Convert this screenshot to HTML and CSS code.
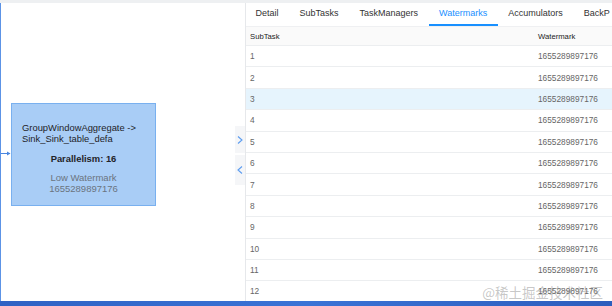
FILE: index.html
```html
<!DOCTYPE html>
<html lang="en">
<head>
  <meta charset="UTF-8">
  <title>Job Graph - Watermarks</title>
  <link rel="stylesheet" href="styles.css">
</head>
<body>
<div class="screen">
  <div class="main">
    <div class="graph">
      <svg class="edge" width="10" height="7" viewBox="0 0 10 7">
        <line x1="0" y1="3.5" x2="9" y2="3.5" stroke="#4a86e0" stroke-width="1"/>
        <path d="M6 1.5 L9.5 3.5 L6 5.5 Z" fill="#4a86e0"/>
      </svg>
      <div class="node">
        <div class="node-name">GroupWindowAggregate -&gt;<br>Sink_Sink_table_defa</div>
        <div class="node-par">Parallelism: 16</div>
        <div class="node-wm">Low Watermark<br>1655289897176</div>
      </div>
      <div class="toggle toggle-open">
        <svg width="8" height="10" viewBox="0 0 8 10"><path d="M2 1.5 L6 5 L2 8.5" fill="none" stroke="#5b9cf0" stroke-width="1.1"/></svg>
      </div>
      <div class="toggle toggle-close">
        <svg width="8" height="10" viewBox="0 0 8 10"><path d="M6 1.5 L2 5 L6 8.5" fill="none" stroke="#5b9cf0" stroke-width="1.1"/></svg>
      </div>
    </div>

    <div class="panel">
      <div class="tabs">
        <div class="tab">Detail</div>
        <div class="tab">SubTasks</div>
        <div class="tab">TaskManagers</div>
        <div class="tab active">Watermarks</div>
        <div class="tab">Accumulators</div>
        <div class="tab">BackP</div>
      </div>
      <table class="wm-table">
        <thead>
          <tr><th class="col-sub">SubTask</th><th>Watermark</th></tr>
        </thead>
        <tbody id="rows"></tbody>
      </table>
    </div>
  </div>
  <div class="taskbar"></div>
  <div class="site-mark">@稀土掘金技术社区</div>
</div>

<script>
  const rows = document.getElementById("rows");
  let html = "";
  for (let i = 1; i <= 12; i++) {
    const cls = i === 3 ? ' class="hover"' : "";
    html += `<tr${cls}><td class="col-sub">${i}</td><td>1655289897176</td></tr>`;
  }
  rows.innerHTML = html;
</script>
</body>
</html>
```

FILE: styles.css
```css
body {
  margin: 0;
  padding: 0;
  font-family: "Liberation Sans", Arial, sans-serif;
  background: #fff;
  overflow: hidden;
}

.screen {
  width: 612px;
  height: 306px;
  position: relative;
  display: flex;
  flex-direction: column;
  border-top: 3px solid #eef0f2;
  box-sizing: border-box;
}

.main {
  flex: 1;
  display: flex;
  min-height: 0;
}

.graph {
  width: 244px;
  position: relative;
  border-left: 1px solid #5c93e6;
  border-right: 1px solid #e6e8eb;
  background: #fff;
}

.edge {
  position: absolute;
  left: 0;
  top: 147px;
}

.node {
  position: absolute;
  left: 10px;
  top: 100px;
  width: 145px;
  height: 103px;
  box-sizing: border-box;
  background: #a9cdf6;
  border: 1px solid #79b0ef;
  color: #1f2328;
}

.node-name {
  font-size: 9.4px;
  line-height: 11px;
  padding: 18px 0 0 10px;
}

.node-par {
  font-size: 9.4px;
  font-weight: bold;
  text-align: center;
  margin-top: 9px;
}

.node-wm {
  font-size: 9.5px;
  line-height: 11px;
  color: #6b7480;
  text-align: center;
  margin-top: 8px;
}

.toggle {
  position: absolute;
  right: 0;
  width: 10px;
  background: #f5f6f8;
  display: flex;
  align-items: center;
  justify-content: center;
}

.toggle-open {
  top: 123px;
  height: 27px;
}

.toggle-close {
  top: 152px;
  height: 30px;
}

.panel {
  flex: 1;
  min-width: 0;
  overflow: hidden;
}

.tabs {
  display: flex;
  height: 23px;
  border-bottom: 1px solid #eff0f2;
  margin-left: -1px;
  white-space: nowrap;
}

.tab {
  padding: 0 10.5px;
  font-size: 9px;
  color: #333;
  line-height: 21px;
  border-bottom: 2px solid transparent;
}

.tab.active {
  color: #1890ff;
  border-bottom-color: #1890ff;
}

.wm-table {
  width: 100%;
  border-collapse: collapse;
}

.wm-table th {
  height: 18px;
  font-size: 7.7px;
  font-weight: normal;
  color: #222;
  text-align: left;
  background: #fafafa;
  padding: 0 4px;
  border-bottom: 1px solid #eceef0;
}

.wm-table td {
  height: 20.4px;
  padding: 0 4px;
  font-size: 8.3px;
  color: #666;
  border-bottom: 1px solid #eceef0;
}

.wm-table .col-sub {
  width: 280px;
}

.wm-table tr.hover td {
  background: #e6f4fd;
}

.taskbar {
  height: 5px;
  background: linear-gradient(to right, #2f62c4, #3a73d6 50%, #2c5dbd);
}

/* site watermark laid over the table corner */
.site-mark {
  position: absolute;
  right: 9px;
  bottom: 6px;
  font-family: "Noto Sans CJK SC", sans-serif;
  font-size: 13.5px;
  line-height: 16px;
  color: rgba(130, 130, 130, 0.45);
  white-space: nowrap;
}
```
